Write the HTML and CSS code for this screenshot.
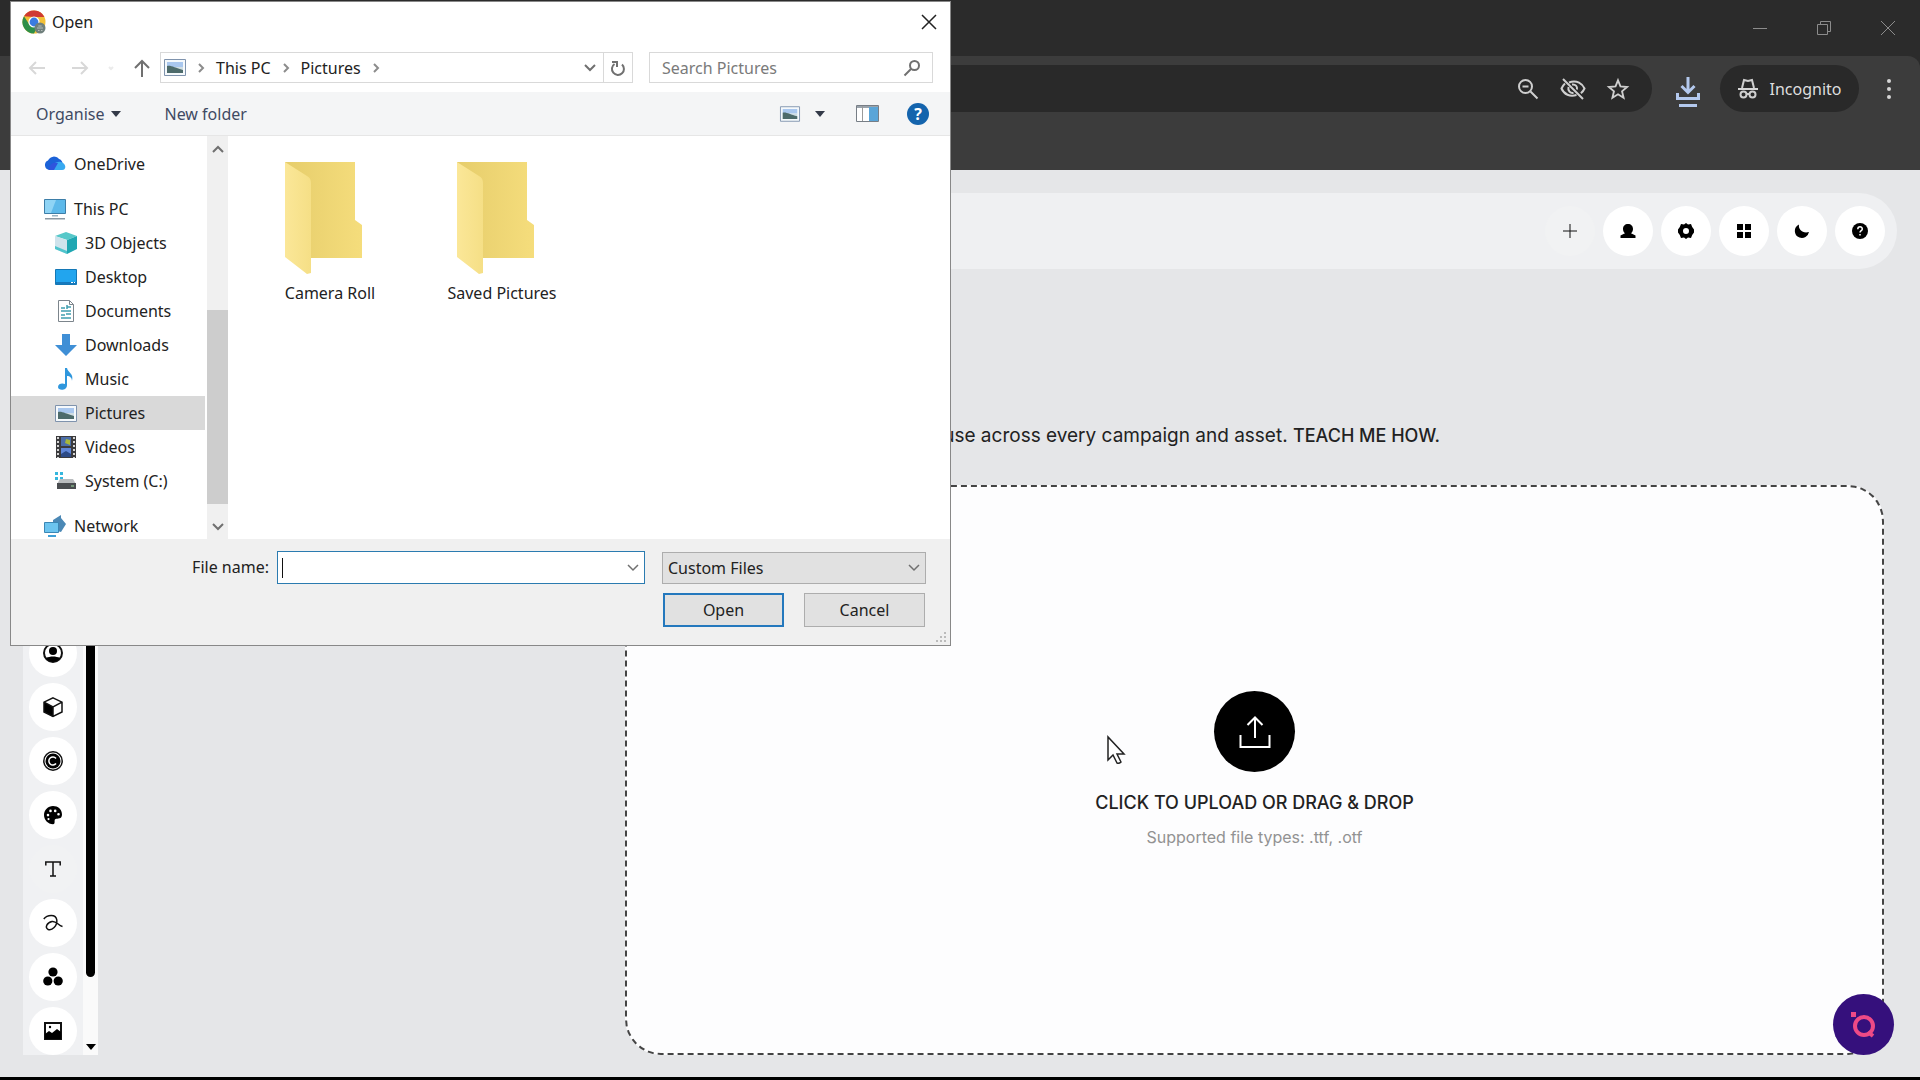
FILE: index.html
```html
<!DOCTYPE html>
<html lang="en">
<head>
<meta charset="utf-8">
<title>Brand fonts</title>
<link rel="stylesheet" href="styles.css">
</head>
<body>
<header class="chrome">
  <div class="tabstrip">
    <button class="win-btn" aria-label="Minimise"><svg width="14" height="14" viewBox="0 0 14 14"><path d="M0 7.500h14" /></svg></button>
    <button class="win-btn" aria-label="Restore"><svg width="14" height="14" viewBox="0 0 14 14"><path d="M.5 3.500h10v10H.5zM3.500 3.500v-3h10v10h-3" /></svg></button>
    <button class="win-btn" aria-label="Close window"><svg width="14" height="14" viewBox="0 0 14 14"><path d="M0 0l14 14M14 0L0 14" /></svg></button>
  </div>
  <div class="toolbar">
    <div class="omnibox">
      <button class="bar-btn" aria-label="Zoom"><svg width="22" height="22" viewBox="0 0 22 22"><circle cx="8.500" cy="8.500" r="6.500"/><path d="M13.500 13.500l7 7M5.500 8.500h6"/></svg></button>
      <button class="bar-btn" aria-label="Third-party cookies blocked"><svg width="26" height="22" viewBox="0 0 26 22"><path d="M9 4.500C17 1.500 22.500 6 24.500 10.500c-.9 2-2 3.500-3.600 4.800M5 5.500C3.400 7 2.300 8.600 1.500 10.500 4 16.500 10 19 16.500 17M8.500 9c-1 4 2 6.500 5 6M12 6.500c3.500-.5 5.500 2 5 5M3 1l20 20"/></svg></button>
      <button class="bar-btn" aria-label="Bookmark"><svg width="22" height="22" viewBox="0 0 24 24"><path d="M12 2.500l2.700 6.700 7.200.6-5.500 4.700 1.700 7L12 17.800 5.900 21.500l1.700-7L2.100 9.800l7.200-.6z"/></svg></button>
    </div>
    <button class="bar-btn download" aria-label="Downloads"><svg width="24" height="30" viewBox="0 0 24 30"><path d="M12 0v15M5.500 9l6.500 6.500L18.500 9M1.500 16v5.500h21V16M3 28.500h18"/></svg></button>
    <button class="incognito"><svg width="20" height="20" viewBox="0 0 20 20"><path class="solid" d="M0 9h20v2H0z"/><path d="M4 9l2-8 4 1 4-1 2 8"/><circle cx="5.500" cy="15.500" r="3"/><circle cx="14.500" cy="15.500" r="3"/><path d="M8.500 15h3"/></svg>Incognito</button>
    <button class="bar-btn menu" aria-label="Menu"><svg width="6" height="20" viewBox="0 0 6 20"><g class="solid"><circle cx="3" cy="2" r="2"/><circle cx="3" cy="10" r="2"/><circle cx="3" cy="18" r="2"/></g></svg></button>
  </div>
</header>

<div class="app">
  <nav class="topbar" aria-label="Account">
    <button class="round plain" aria-label="Add"><svg width="14" height="14" viewBox="0 0 14 14"><path class="line thin" d="M7 0v14M0 7h14"/></svg></button>
    <button class="round" aria-label="Profile"><svg width="16" height="16" viewBox="0 0 16 16"><path d="M8 1c3 0 5 2 5 5 0 2-.8 3.300-2 4.200l4.500 2.300V15H.5v-2.500L5 10.200C3.800 9.300 3 8 3 6c0-3 2-5 5-5z"/></svg></button>
    <button class="round" aria-label="Settings"><svg width="18" height="18" viewBox="0 0 18 18"><path fill-rule="evenodd" d="M4 2l3 .5L9 1l2 1.500L14 2l1.200 3L17 7.500v3L15.200 13 14 16l-3-.5L9 17l-2-1.500L4 16l-1.200-3L1 10.500v-3L2.800 5zM9 6a3 3 0 100 6 3 3 0 000-6z"/></svg></button>
    <button class="round" aria-label="Apps"><svg width="14" height="14" viewBox="0 0 14 14"><path d="M0 0h6v6H0zM8 0h6v6H8zM0 8h6v6H0zM8 8h6v6H8z"/></svg></button>
    <button class="round" aria-label="Dark mode"><svg width="16" height="16" viewBox="0 0 16 16"><path d="M5 1.500c-1 5 4 9.500 10 7.500A7.300 7.300 0 015.500 14.500 7 7 0 015 1.500z"/></svg></button>
    <button class="round" aria-label="Help"><svg width="16" height="16" viewBox="0 0 16 16"><circle cx="8" cy="8" r="8"/><path class="cut" d="M5.800 6.300C5.800 3 10.300 3.200 10.300 6c0 1.600-2.300 1.700-2.300 3.500M8 11v1.500"/></svg></button>
  </nav>

  <div class="workspace">
    <aside class="rail">
      <nav class="rail-list" aria-label="Brand assets">
        <button class="round" aria-label="People"><svg width="20" height="20" viewBox="0 0 20 20"><circle class="line thick" cx="10" cy="10" r="9"/><circle cx="10" cy="8" r="4"/><path d="M3 15c4-2 10-2 14 0-3 5-11 5-14 0z"/></svg></button>
        <button class="round" aria-label="Products"><svg width="20" height="20" viewBox="0 0 20 20"><path d="M1 5l9 5v10l-9-5z"/><path class="line" d="M10 .8l9 4.400v9.800l-9 4.400-9-4.400V5.200zM1 5.200l9 4.600 9-4.600M10 10v9"/></svg></button>
        <button class="round" aria-label="Copyright"><svg width="20" height="20" viewBox="0 0 20 20"><circle class="line" cx="10" cy="10" r="9.200"/><circle cx="10" cy="10" r="7.500"/><path class="cut" d="M13 7.500A4 4 0 1013 12.500"/></svg></button>
        <button class="round" aria-label="Colours"><svg width="20" height="20" viewBox="0 0 20 20"><path fill-rule="evenodd" d="M10 1c5 0 9 3.300 9 8.500 0 5-4.500 3.800-6.500 4.500-2 .8.500 5-2.500 5.300C5 19 1 15 1 10s4-9 9-9zM5 8.800a1.300 1.300 0 100 2.600 1.300 1.300 0 000-2.600zM7.500 4.600a1.300 1.300 0 100 2.600 1.300 1.300 0 000-2.600zM12.200 4.600a1.300 1.300 0 100 2.600 1.300 1.300 0 000-2.600zM15.500 8a1.300 1.300 0 100 2.600 1.300 1.300 0 000-2.600zM5.500 13a1.100 1.100 0 100 2.200 1.100 1.100 0 000-2.200z"/></svg></button>
        <button class="round plain" aria-label="Typography"><svg width="16" height="16" viewBox="0 0 16 16"><path class="line" d="M.8 4.500V1h14.400v3.500M8 1v14M5 15h6"/></svg></button>
        <button class="round" aria-label="Signature"><svg width="20" height="18" viewBox="0 0 20 18"><path class="line" d="M.8 5C4 .5 13-.5 13.800 6c.7 6-5 11-8.600 9.500C1.500 13.500 4 8.500 9 7.500c4.500-.8 6 4 10.500 5"/></svg></button>
        <button class="round" aria-label="Groups"><svg width="20" height="20" viewBox="0 0 20 20"><circle cx="10" cy="5" r="4.600"/><circle cx="4.800" cy="14" r="4.600"/><circle cx="15.200" cy="14" r="4.600"/></svg></button>
        <button class="round" aria-label="Images"><svg width="18" height="18" viewBox="0 0 18 18"><path class="line thick" d="M1 1h16v16H1z"/><path d="M1 12l4-3 3 2 5-4 4 3v7H1z"/><circle cx="6" cy="5" r="1.200"/></svg></button>
      </nav>
      <div class="rail-scroll">
        <div class="rail-thumb"></div>
        <svg width="10" height="6" viewBox="0 0 10 6"><path d="M0 0h10L5 6z"/></svg>
      </div>
    </aside>
    <main class="content">
      <p class="intro">use across every campaign and asset. <a href="#teach">TEACH ME HOW.</a></p>
      <button class="dropzone">
        <span class="upload-icon"><svg width="32" height="32" viewBox="0 0 32 32"><path d="M16 22V1.500M8.500 9L16 1.500 23.500 9M1.500 19v12h29V19"/></svg></span>
        <span class="upload-title">CLICK TO UPLOAD OR DRAG &amp; DROP</span>
        <span class="upload-hint">Supported file types: .ttf, .otf</span>
      </button>
    </main>
  </div>
  <button class="assistant" aria-label="Assistant"><svg width="28" height="28" viewBox="0 0 28 28"><path d="M1 1h5v5H1z"/><circle cx="14" cy="15" r="9"/><path class="tail" d="M18 21l5 4"/></svg></button>
</div>

<section class="dialog" role="dialog" aria-labelledby="dialog-title">
  <header class="dlg-title">
    <svg width="24" height="24" viewBox="0 0 24 24"><circle cx="12" cy="12" r="11.500" fill="#f2c037"/><path d="M2 6.200A11.500 11.500 0 0122.400 7H12z" fill="#cf3a33"/><path d="M2 6.200A11.500 11.500 0 0012 23.500l4.500-9L7.600 15z" fill="#2e8f49"/><circle cx="12" cy="12" r="5.600" fill="#fff"/><circle cx="12" cy="12" r="4.400" fill="#3a7be0"/><circle cx="18" cy="18" r="5.500" fill="#6f7f7c"/><path d="M15 18h6M16 20.500h1.500M19 20.500h1.500M16.300 16h3.400" stroke="#b5bdb9"/></svg>
    <h1 id="dialog-title">Open</h1>
    <button class="bare close" aria-label="Close"><svg class="ico dark" width="16" height="16" viewBox="0 0 16 16"><path d="M1 1l14 14M15 1L1 15"/></svg></button>
  </header>

  <div class="dlg-nav">
    <div class="history">
      <button class="bare" aria-label="Back"><svg class="ico faint" width="16" height="14" viewBox="0 0 16 14"><path d="M16 7H1M7 1L1 7l6 6"/></svg></button>
      <button class="bare" aria-label="Forward"><svg class="ico faint" width="16" height="14" viewBox="0 0 16 14"><path d="M0 7h15M9 1l6 6-6 6"/></svg></button>
      <button class="bare" aria-label="Recent"><svg class="ico fainter" width="6" height="4" viewBox="0 0 6 4"><path d="M1 1l2 2 2-2"/></svg></button>
      <button class="bare" aria-label="Up"><svg class="ico grey" width="16" height="18" viewBox="0 0 16 18"><path d="M8 18V2M1 9l7-7 7 7"/></svg></button>
    </div>
    <div class="address">
      <svg width="22" height="17" viewBox="0 0 22 17"><use href="#i-pic"/></svg>
      <svg class="ico light" width="6" height="10" viewBox="0 0 6 10"><path d="M1 1l4 4-4 4"/></svg>
      <a href="#pc">This PC</a>
      <svg class="ico light" width="6" height="10" viewBox="0 0 6 10"><path d="M1 1l4 4-4 4"/></svg>
      <a href="#pictures">Pictures</a>
      <svg class="ico light" width="6" height="10" viewBox="0 0 6 10"><path d="M1 1l4 4-4 4"/></svg>
      <button class="bare drop" aria-label="Previous locations"><svg class="ico grey" width="12" height="8" viewBox="0 0 12 8"><path d="M1 1l5 5 5-5"/></svg></button>
      <button class="bare refresh" aria-label="Refresh"><svg class="ico grey" width="16" height="16" viewBox="0 0 16 16"><path d="M12 4.500A6 6 0 114.500 4M2 2h5v5"/></svg></button>
    </div>
    <label class="search"><input type="search" placeholder="Search Pictures" aria-label="Search Pictures"><svg class="ico grey" width="16" height="16" viewBox="0 0 16 16"><circle cx="10.500" cy="5.500" r="4.500"/><path d="M7 9l-6.500 6.500"/></svg></label>
  </div>

  <div class="dlg-tools">
    <button class="bare organise">Organise <svg width="10" height="6" viewBox="0 0 10 6"><path d="M0 0h10L5 6z"/></svg></button>
    <button class="bare new-folder">New folder</button>
    <button class="bare view" aria-label="Change view"><svg width="20" height="16" viewBox="0 0 22 17"><use href="#i-pic"/></svg><svg width="10" height="6" viewBox="0 0 10 6"><path d="M0 0h10L5 6z"/></svg></button>
    <button class="bare pane" aria-label="Preview pane"><svg width="23" height="17" viewBox="0 0 23 17"><path d="M.5 .5h22v16H.5z" fill="#fff" stroke="#777e86"/><path d="M1 1h21v2H1z" fill="#9aa3ab"/><path d="M6.500 1v15" stroke="#9a9a9a"/><path d="M13 2h9v14h-9z" fill="#5aa5d8"/></svg></button>
    <button class="help" aria-label="Get help">?</button>
  </div>

  <div class="dlg-body">
    <nav class="tree" aria-label="Folders">
      <a class="node" href="#onedrive"><svg width="22" height="22" viewBox="0 0 22 22"><path d="M5 17a5 5 0 01-1-9.500A6.500 6.500 0 0115 6c2 .5 3 2 3.500 4L8 17z" fill="#1b62d8"/><path d="M6 17c2-6 6-9 11-8 5 1 6 8 1 8z" fill="#38a9f0"/><path d="M5 17c0-6 5-9 9-7l-4 7z" fill="#2f55dd"/></svg>OneDrive</a>
      <a class="node group" href="#pc"><svg width="22" height="22" viewBox="0 0 22 22"><path d="M.5 1.500h21v14H.5z" fill="#5db9ea" stroke="#3d7ea8"/><path d="M1 2h11L7 15H1z" fill="#8fd4f5"/><path d="M8 17h6v1.500H8z" fill="#9ab3c2"/><path d="M1 20h20v1.500H1z" fill="#8b98a3"/></svg>This PC</a>
      <a class="node sub" href="#objects"><svg width="22" height="22" viewBox="0 0 22 22"><path d="M0 4l11-4 11 4-10 4z" fill="#56c8c9"/><path d="M0 4l12 4v14L0 17z" fill="#cfe3ec"/><path d="M12 8l10-4v13l-10 5z" fill="#1fa7b2"/><path d="M0 14l12 5v3L0 17z" fill="#4fc4cc"/></svg>3D Objects</a>
      <a class="node sub" href="#desktop"><svg width="22" height="22" viewBox="0 0 22 22"><path d="M.5 3.500h21v15H.5z" fill="#22a5ee" stroke="#1478b6"/><path d="M1 16h20v2H1z" fill="#1679bd"/><path d="M16 16h2v1h-2zM19 16h1v1h-1z" fill="#fff"/></svg>Desktop</a>
      <a class="node sub" href="#documents"><svg width="22" height="22" viewBox="0 0 22 22"><path d="M3.500 .5h11l4 4v17h-15z" fill="#fff" stroke="#7c858c"/><path d="M14.500 .5v4h4" fill="none" stroke="#7c858c"/><path d="M6 8h4M12 5v4M12 7h4M6 11h10M6 15h4M11 14h5M6 18h10" stroke="#3f9fb0" stroke-width="1.500"/></svg>Documents</a>
      <a class="node sub" href="#downloads"><svg width="22" height="22" viewBox="0 0 22 22"><path d="M7 0h8v11h7L11 22 0 11h7z" fill="#3f8fd6"/></svg>Downloads</a>
      <a class="node sub" href="#music"><svg width="22" height="22" viewBox="0 0 22 22"><path d="M10 0h2c1 5 7 5 5 13 0-3-2-5-5-5v9c0 6-9 6-9 2s5-4 7-3z" fill="#2f97dd"/></svg>Music</a>
      <a class="node sub selected" href="#pictures" aria-current="true"><svg width="22" height="22" viewBox="0 -3 22 22"><g id="i-pic"><path d="M.5 .5h21v16H.5z" fill="#f5f9fc" stroke="#7f93ad"/><path d="M3 3h16v5H3z" fill="#a9c7ee"/><path d="M3 8h16v6H3z" fill="#cfdde3"/><path d="M3 7c4-1 8 2 16 4v3H3z" fill="#4d6b6b"/></g></svg>Pictures</a>
      <a class="node sub" href="#videos"><svg width="22" height="22" viewBox="0 0 22 22"><path d="M1 0h20v22H1z" fill="#3b3b3d"/><path d="M6 1h10v9H6z" fill="#4c6ea8"/><path d="M6 12h10v9H6z" fill="#5f86d8"/><path d="M11 3l4 1v5l-5-2z" fill="#a9b83a"/><path d="M3 1v21M19 1v21" stroke="#d5d5d5" stroke-width="2" stroke-dasharray="2 2"/><path d="M6 18l5-3 5 3v3H6z" fill="#2c4a86"/></svg>Videos</a>
      <a class="node sub" href="#c"><svg width="22" height="22" viewBox="0 0 22 22"><path d="M0 2h3v3H0zM5 2h3v3H5zM0 7h3v3H0zM5 7h3v3H5z" fill="#35b6dd"/><path d="M5 9h13l3 5H2z" fill="#b9bcbe"/><path d="M2 13h19v6H2z" fill="#4a4d50"/><path d="M16 16h3" stroke="#9fe0a0"/></svg>System (C:)</a>
      <a class="node group" href="#network"><svg width="22" height="22" viewBox="0 0 22 22"><path d="M9 5l8-5v3l5 6-5 8-8-2z" fill="#4b88b5"/><path d="M.5 7.500h14v10H.5z" fill="#6cc4ef" stroke="#3b87b5"/><path d="M4 20h8v2H4z" fill="#3f9fd6"/></svg>Network</a>
    </nav>
    <div class="scrollbar">
      <svg class="ico grey" width="12" height="8" viewBox="0 0 12 8"><path d="M1 7l5-5 5 5"/></svg>
      <div class="thumb"></div>
      <svg class="ico grey" width="12" height="8" viewBox="0 0 12 8"><path d="M1 1l5 5 5-5"/></svg>
    </div>
    <div class="files">
      <a class="file" href="#camera"><svg width="90" height="114" viewBox="0 0 90 114"><defs><linearGradient id="back" x1="0" x2="1"><stop offset="0" stop-color="#e6cd6b"/><stop offset="1" stop-color="#f5dd7c"/></linearGradient><linearGradient id="front" x1="0" x2="1"><stop offset="0" stop-color="#fbe798"/><stop offset="1" stop-color="#f5df86"/></linearGradient></defs><path d="M0 1h70v58l7 5v33H24L0 60z" fill="url(#back)"/><path d="M0 1l22 14q4 2 4 7v90l-4 1-22-17z" fill="url(#front)"/></svg>Camera Roll</a>
      <a class="file" href="#saved"><svg width="90" height="114" viewBox="0 0 90 114"><path d="M0 1h70v58l7 5v33H24L0 60z" fill="url(#back)"/><path d="M0 1l22 14q4 2 4 7v90l-4 1-22-17z" fill="url(#front)"/></svg>Saved Pictures</a>
    </div>
  </div>

  <footer class="dlg-foot">
    <label class="name-label" for="fname">File name:</label>
    <div class="name-box"><input id="fname" type="text"><span class="caret"></span><svg class="ico grey thin" width="12" height="8" viewBox="0 0 12 8"><path d="M1 1l5 5 5-5"/></svg></div>
    <div class="type-box"><select aria-label="File type"><option>Custom Files</option></select><svg class="ico grey thin" width="12" height="8" viewBox="0 0 12 8"><path d="M1 1l5 5 5-5"/></svg></div>
    <div class="actions"><button class="btn primary">Open</button><button class="btn">Cancel</button></div>
    <svg class="grip" width="12" height="12" viewBox="0 0 12 12"><path d="M9 1h2v2H9zM9 5h2v2H9zM5 5h2v2H5zM9 9h2v2H9zM5 9h2v2H5zM1 9h2v2H1z"/></svg>
  </footer>
</section>

<svg class="cursor" width="20" height="30" viewBox="0 0 20 30"><path d="M1 1v23l5-5 4 8q2 1 4-1l-4-8h7z"/></svg>
</body>
</html>
```
FILE: styles.css
```css
* { box-sizing: border-box; }

body {
  margin: 0;
  min-height: 100vh;
  display: flex;
  flex-direction: column;
  position: relative;
  background: #e5e6e8;
  border-bottom: 3px solid #000;
  font-family: "Noto Sans", "Open Sans", sans-serif;
  font-size: 16px;
  color: #222;
}

button, input, select { font: inherit; color: inherit; }
button { margin: 0; padding: 0; border: 0; background: none; }
a { color: inherit; text-decoration: none; }
svg { display: block; flex: none; overflow: visible; }

/* Browser window */
.chrome { background: #2b2b2b; }
.tabstrip { height: 56px; display: flex; justify-content: flex-end; align-items: center; gap: 50px; padding-right: 25px; }
.win-btn svg { fill: none; stroke: #8c8c8c; }
.toolbar {
  height: 114px;
  display: flex;
  align-items: flex-start;
  padding: 9px 28px 0 16px;
  background: #3c3c3c;
  border-radius: 0 12px 0 0;
}
.omnibox {
  flex: 1;
  height: 47px;
  display: flex;
  justify-content: flex-end;
  align-items: center;
  gap: 21px;
  padding-right: 23px;
  background: #292929;
  border-radius: 24px;
}
.bar-btn svg, .incognito svg { fill: none; stroke: #cfcfcf; stroke-width: 2; }
.toolbar .solid { fill: #d6d6d6; stroke: none; }
.toolbar .download { margin: 12px 20px 0 24px; }
.toolbar .download svg { stroke: #b4c9ee; stroke-width: 3; }
.incognito {
  width: 139px;
  height: 47px;
  display: flex;
  align-items: center;
  justify-content: center;
  gap: 12px;
  border-radius: 24px;
  background: #292929;
  color: #dedede;
}
.menu { margin: 14px 0 0 27px; }

/* App */
.app { flex: 1; position: relative; display: flex; flex-direction: column; padding: 23px 23px 22px 23px; }
.topbar {
  height: 76px;
  display: flex;
  justify-content: flex-end;
  align-items: center;
  gap: 8px;
  padding-right: 12px;
  border-radius: 38px;
  background: #eff0f2;
}
.round {
  width: 50px;
  height: 50px;
  display: flex;
  flex: none;
  align-items: center;
  justify-content: center;
  border-radius: 50%;
  background: #fff;
}
.round.plain { background: #f1f2f3; }
.line { fill: none; stroke: #111; stroke-width: 1.5; }
.line.thick { stroke-width: 2; }
.line.thin { stroke-width: 1; }
.cut { fill: none; stroke: #fff; stroke-width: 1.5; }

.workspace { flex: 1; display: flex; padding-top: 20px; }
.rail { width: 75px; display: flex; background: #f0f1f3; }
.rail-list { flex: 1; display: flex; flex-direction: column; align-items: center; justify-content: flex-end; gap: 6px; }
.rail-list .round { width: 48px; height: 48px; }
.rail-scroll { width: 15px; display: flex; flex-direction: column; align-items: center; padding-bottom: 5px; background: #fafafa; }
.rail-thumb { flex: 1; width: 9px; margin-bottom: 67px; border-radius: 5px; background: #000; }

.content { flex: 1; display: flex; flex-direction: column; margin: 0 13px 0 527px; font-family: Inter, sans-serif; }
.intro { margin: 0; padding: 133px 0 35px; width: 815px; text-align: right; font-size: 19px; line-height: 28px; }
.intro a { font-size: 18px; font-weight: 500; }
.dropzone {
  flex: 1;
  display: flex;
  flex-direction: column;
  align-items: center;
  justify-content: center;
  border: 2px dashed #444;
  border-radius: 36px;
  background: #fdfdfe;
}
.upload-icon { width: 81px; height: 81px; display: flex; align-items: center; justify-content: center; margin-bottom: 18px; border-radius: 50%; background: #000; }
.upload-icon svg { fill: none; stroke: #fff; stroke-width: 2; }
.upload-title { font-size: 18px; line-height: 26px; font-weight: 500; margin-bottom: 9px; }
.upload-hint { font-size: 16px; line-height: 24px; color: #929292; }

.assistant {
  position: absolute;
  right: 26px;
  bottom: 22px;
  width: 61px;
  height: 61px;
  display: flex;
  align-items: center;
  justify-content: center;
  border-radius: 50%;
  background: #35107c;
}
.assistant svg { fill: #ee4a86; }
.assistant circle, .assistant .tail { fill: none; stroke: #ee4a86; stroke-width: 4; }

/* File dialog */
.dialog {
  position: absolute;
  left: 10px;
  top: 1px;
  width: 941px;
  border: 1px solid #888;
  background: #fff;
  line-height: 22px;
}
.ico { fill: none; stroke-width: 2; }
.ico.thin { stroke-width: 1.5; }
.dark { stroke: #222; stroke-width: 1.5; }
.grey { stroke: #707070; }
.light { stroke: #8c8c8c; }
.faint { stroke: #d8d8d8; }
.fainter { stroke: #ebebeb; }
.bare { display: flex; align-items: center; }

.dlg-title { height: 40px; display: flex; align-items: center; gap: 6px; padding: 0 13px 0 11px; }
.dlg-title h1 { flex: 1; margin: 0; font-size: 16px; font-weight: 400; }

.dlg-nav { display: flex; padding: 10px 17px 9px 18px; }
.history { width: 131px; display: flex; align-items: center; gap: 24px; }
.history button:nth-child(2) { margin-left: 3px; }
.history button:nth-child(3) { margin: 0 -4px; }
.address { width: 473px; height: 31px; display: flex; align-items: center; gap: 12px; padding-left: 3px; border: 1px solid #d9d9d9; }
.drop { margin-left: auto; }
.refresh { width: 29px; height: 29px; justify-content: center; margin-left: -5px; border-left: 1px solid #d9d9d9; }
.search { flex: 1; display: flex; align-items: center; margin-left: 16px; padding: 0 12px; border: 1px solid #d9d9d9; }
.search input { flex: 1; min-width: 0; padding: 0; border: 0; outline: 0; background: none; }
.search input::placeholder { color: #7a7a7a; opacity: 1; }

.dlg-tools { height: 44px; display: flex; align-items: center; padding: 0 21px 0 25px; border-bottom: 1px solid #e6e6e6; background: #f4f5f6; color: #3f4a63; }
.dlg-tools .organise { gap: 7px; }
.organise svg, .view svg:last-child { fill: #333a48; }
.new-folder { margin-left: 43px; }
.view { gap: 15px; margin-left: auto; }
.pane { margin: 0 28px 0 31px; }
.help { width: 22px; height: 22px; border-radius: 50%; background: #1464ad; color: #fff; font-weight: 700; line-height: 22px; }

.dlg-body { height: 403px; display: flex; }
.tree { width: 196px; padding: 11px 2px 0 0; overflow: hidden; }
.node { height: 34px; display: flex; align-items: center; gap: 8px; padding-left: 33px; }
.node.group { margin-top: 11px; }
.node.sub { padding-left: 44px; }
.node.selected { background: #d9d9d9; }
.scrollbar { width: 21px; display: flex; flex-direction: column; align-items: center; padding: 9px 0 8px; background: #f0f0f0; }
.thumb { width: 100%; height: 194px; margin: auto 0 19px; background: #cdcdcd; }
.files { flex: 1; display: flex; align-items: flex-start; padding: 25px 0 0 16px; }
.file { width: 172px; display: flex; flex-direction: column; align-items: center; gap: 7px; }

.dlg-foot {
  height: 106px;
  position: relative;
  display: grid;
  grid-template-columns: 258px 368px 263px;
  column-gap: 8px;
  grid-template-rows: 33px 34px;
  row-gap: 9px;
  padding-top: 12px;
  background: #f0f0f0;
}
.name-label { text-align: right; line-height: 32px; }
.name-box, .type-box { position: relative; display: flex; align-items: center; }
.type-box { margin-left: 9px; margin-right: -10px; }
.name-box input { width: 100%; height: 33px; padding: 0 30px 0 6px; border: 1px solid #2b7bb0; outline: 0; background: #fff; }
.caret { position: absolute; left: 5px; top: 7px; width: 1px; height: 20px; background: #111; }
.name-box svg, .type-box svg { position: absolute; right: 6px; }
.type-box select { appearance: none; width: 100%; height: 32px; padding: 0 24px 0 5px; border: 1px solid #adadad; border-radius: 0; background: #e1e1e1; }
.actions { grid-column: 3; display: grid; grid-template-columns: 121px 121px; gap: 20px; margin-left: 10px; }
.btn { border: 1px solid #adadad; background: #e1e1e1; }
.btn.primary { border: 2px solid #2478bd; }
.grip { position: absolute; right: 3px; bottom: 2px; fill: #bbb; }

.cursor { position: absolute; left: 1107px; top: 736px; fill: #fff; stroke: #222; stroke-width: 1.5; }
```
